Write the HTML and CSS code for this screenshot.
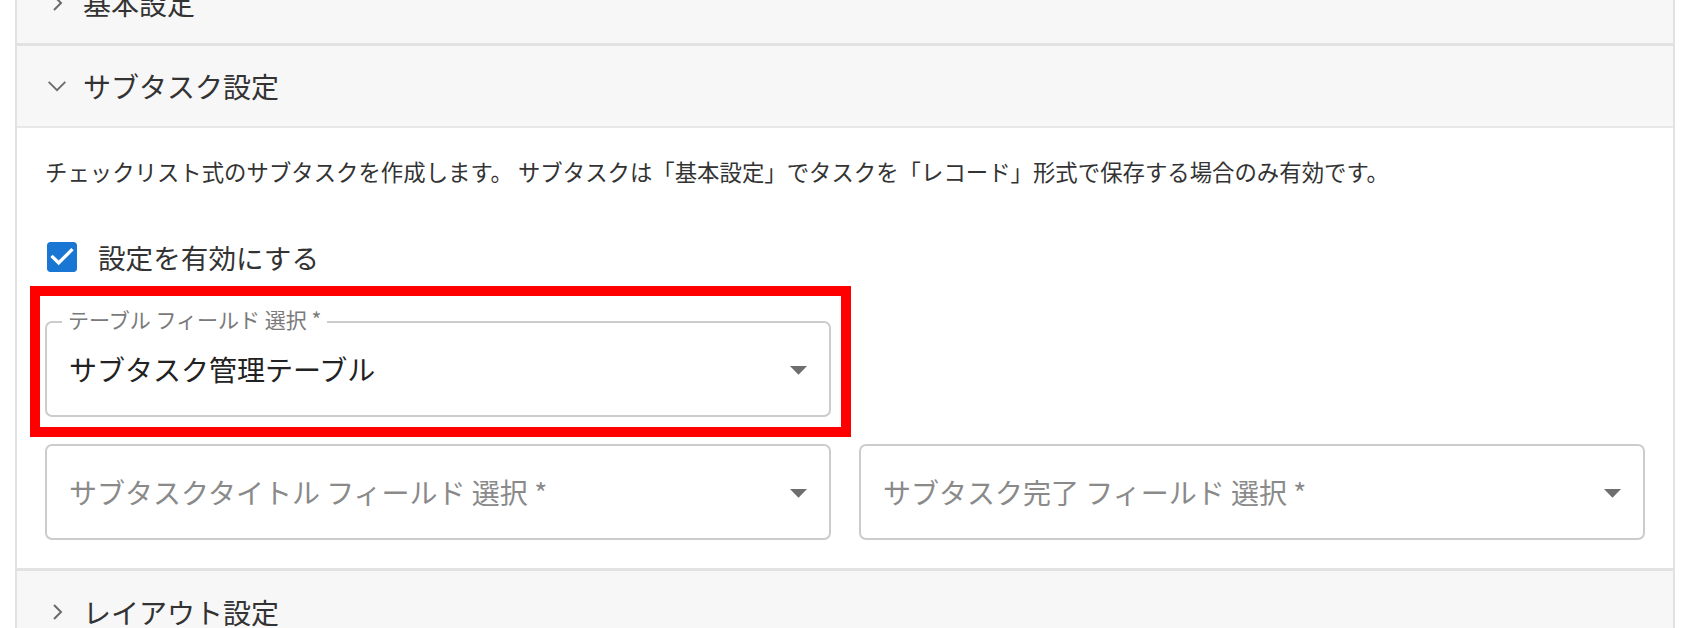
FILE: index.html
```html
<!DOCTYPE html>
<html lang="ja">
<head>
<meta charset="utf-8">
<title>サブタスク設定</title>
<link rel="stylesheet" href="styles.css">
</head>
<body>
<div class="panel">
  <section class="acc first">
    <div class="acc-head">
      <svg class="chev" viewBox="0 0 24 24"><polyline points="9,5 16,12 9,19"/></svg>
      <span>基本設定</span>
    </div>
  </section>
  <section class="acc open">
    <div class="acc-head">
      <svg class="chev" viewBox="0 0 24 24"><polyline points="2,7 12,17 22,7"/></svg>
      <span>サブタスク設定</span>
    </div>
    <div class="acc-body">
      <p class="desc">チェックリスト式のサブタスクを作成します。 サブタスクは「基本設定」でタスクを「レコード」形式で保存する場合のみ有効です。</p>
      <label class="check">
        <svg class="check-icon" viewBox="0 0 24 24"><path d="M19 3H5c-1.11 0-2 .9-2 2v14c0 1.1.89 2 2 2h14c1.11 0 2-.9 2-2V5c0-1.1-.89-2-2-2zm-9 14l-5-5 1.41-1.41L10 14.17l7.59-7.59L19 8l-9 9z"/></svg>
        <span>設定を有効にする</span>
      </label>
      <div class="fields">
        <div class="row">
          <div class="field">
            <span class="flabel">テーブル フィールド 選択 *</span>
            <span class="value">サブタスク管理テーブル</span>
            <svg class="arrow" viewBox="0 0 24 24"><path d="M7 10l5 5 5-5z"/></svg>
            <span class="hl"></span>
          </div>
        </div>
        <div class="row">
          <div class="field">
            <span class="placeholder">サブタスクタイトル フィールド 選択 *</span>
            <svg class="arrow" viewBox="0 0 24 24"><path d="M7 10l5 5 5-5z"/></svg>
          </div>
          <div class="field">
            <span class="placeholder">サブタスク完了 フィールド 選択 *</span>
            <svg class="arrow" viewBox="0 0 24 24"><path d="M7 10l5 5 5-5z"/></svg>
          </div>
        </div>
      </div>
    </div>
  </section>
  <section class="acc">
    <div class="acc-head">
      <svg class="chev" viewBox="0 0 24 24"><polyline points="9,5 16,12 9,19"/></svg>
      <span>レイアウト設定</span>
    </div>
  </section>
</div>
</body>
</html>
```
FILE: styles.css
```css
html, body {
  margin: 0;
  padding: 0;
  background: #ffffff;
  overflow: hidden;
}

body {
  font-family: "Noto Sans CJK JP", "Noto Sans", sans-serif;
  color: #333333;
}

.panel {
  margin: -38px 0 0 15px;
  width: 1660px;
  box-sizing: border-box;
  border-left: 2px solid #e2e2e2;
  border-right: 2px solid #e2e2e2;
}

.acc-head {
  height: 82px;
  box-sizing: border-box;
  background: #f7f7f7;
  display: flex;
  align-items: center;
  gap: 14px;
  padding-left: 28px;
  font-size: 28px;
  line-height: 34px;
  color: #333333;
}

.acc.first .acc-head {
  height: 81px;
}

.acc.first {
  border-bottom: 3px solid #e2e2e2;
}

.acc.open .acc-head {
  border-bottom: 2px solid #e8e8e8;
}

.acc.open .acc-body {
  border-bottom: 3px solid #e2e2e2;
}

.chev {
  width: 24px;
  height: 24px;
  flex: none;
  fill: none;
  stroke: #6b6b6b;
  stroke-width: 2;
}

.acc.open .chev {
  width: 20px;
  height: 20px;
  margin: 0 2px;
  stroke-width: 2.2;
}

.acc-body {
  background: #ffffff;
  padding: 27px 28px 28px 28px;
}

.desc {
  margin: 0;
  font-size: 22.4px;
  line-height: 32px;
  color: #333333;
}

.check {
  margin-top: 50px;
  height: 40px;
  display: flex;
  align-items: center;
  gap: 16px;
  font-size: 27.6px;
  line-height: 34px;
  color: #333333;
}

.check-icon {
  width: 40px;
  height: 40px;
  margin-left: -3px;
  fill: #1976d2;
}

.fields {
  margin-top: 44px;
  display: flex;
  flex-direction: column;
  gap: 27px;
}

.row {
  display: grid;
  grid-template-columns: 1fr 1fr;
  column-gap: 28px;
}

.field {
  position: relative;
  height: 96px;
  box-sizing: border-box;
  border: 2px solid #cccccc;
  border-radius: 7px;
  display: flex;
  align-items: center;
  padding: 0 10px 0 22px;
}

.flabel {
  position: absolute;
  top: -16px;
  left: 15px;
  padding: 0 6px;
  background: #ffffff;
  font-size: 21px;
  line-height: 24px;
  color: #7a7a7a;
}

.value {
  font-size: 28px;
  line-height: 36px;
  color: #222222;
}

.placeholder {
  font-size: 28px;
  line-height: 36px;
  color: #8a8a8a;
}

.arrow {
  width: 41px;
  height: 41px;
  margin-left: auto;
  fill: #6e6e6e;
}

.hl {
  position: absolute;
  top: -37px;
  left: -17px;
  right: -22px;
  bottom: -22px;
  border: 10px solid #ff0000;
  pointer-events: none;
}
```
